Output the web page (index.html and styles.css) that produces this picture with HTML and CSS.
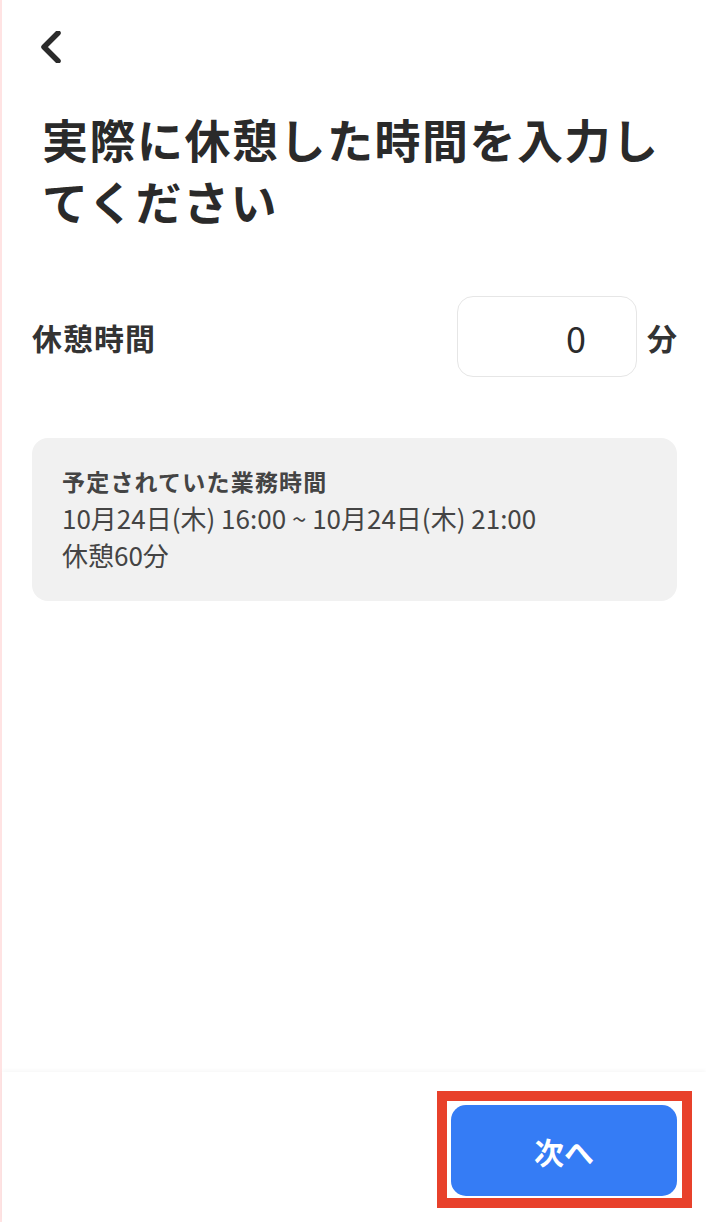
FILE: index.html
```html
<!DOCTYPE html>
<html lang="ja">
<head>
    <meta charset="UTF-8">
    <meta name="viewport" content="width=device-width, initial-scale=1.0">
    <title>休憩時間の入力</title>
    <link rel="stylesheet" href="styles.css">
</head>
<body>
    <div class="page">
        <main class="content">
            <header class="header">
                <button class="back" type="button" aria-label="戻る">
                    <svg width="32" height="32" viewBox="0 0 32 32">
                        <path d="M21 2 L7 16 L21 30" fill="none" stroke="#2b2b2b" stroke-width="5.5" stroke-linecap="round" stroke-linejoin="round"/>
                    </svg>
                </button>
                <h1 class="title">実際に休憩した時間を入力してください</h1>
            </header>

            <div class="break-row">
                <label class="break-label" for="breakMinutes">休憩時間</label>
                <div class="break-field">
                    <input class="break-input" type="text" id="breakMinutes" value="0" inputmode="numeric">
                    <span class="unit">分</span>
                </div>
            </div>

            <section class="schedule">
                <h2 class="schedule-title">予定されていた業務時間</h2>
                <p class="schedule-line">10月24日(木) 16:00 ~ 10月24日(木) 21:00</p>
                <p class="schedule-line">休憩60分</p>
            </section>
        </main>

        <footer class="footer">
            <div class="highlight">
                <button class="next" type="button">次へ</button>
            </div>
        </footer>
    </div>
</body>
</html>
```

FILE: styles.css
```css
html, body {
    margin: 0;
    padding: 0;
}
body {
    font-family: "Noto Sans CJK JP", "Noto Sans", sans-serif;
    color: #2b2b2b;
    background: #fff;
}
.page {
    min-height: 100vh;
    display: flex;
    flex-direction: column;
    border-left: 2px solid #ffe3e3;
    box-sizing: border-box;
}
.content {
    flex: 1;
    padding: 0 29px 0 30px;
}
.header {
    padding-top: 31px;
}
.back {
    display: block;
    margin: 0 0 0 5px;
    padding: 0;
    border: none;
    background: none;
    width: 32px;
    height: 32px;
    cursor: pointer;
}
.back svg {
    display: block;
}
.title {
    margin: 44px 0 0 10px;
    font-size: 46px;
    line-height: 62px;
    letter-spacing: 1.5px;
    font-weight: 700;
    color: #2a2a2a;
}
.break-row {
    display: flex;
    align-items: center;
    justify-content: space-between;
    margin-top: 65px;
}
.break-label {
    font-size: 30px;
    font-weight: 700;
    letter-spacing: 1px;
    color: #333;
}
.break-field {
    display: flex;
    align-items: center;
    gap: 10px;
}
.break-input {
    width: 180px;
    height: 81px;
    box-sizing: border-box;
    border: 1.5px solid #e6e6e6;
    border-radius: 16px;
    padding: 0 50px 0 10px;
    text-align: right;
    font-family: "Noto Sans CJK JP", "Noto Sans", sans-serif;
    font-size: 36px;
    color: #2b2b2b;
    background: #fff;
    outline: none;
}
.unit {
    font-size: 30px;
    font-weight: 700;
    color: #333;
}
.schedule {
    margin-top: 61px;
    background: #f1f1f1;
    border-radius: 16px;
    padding: 25px 30px 28px;
    color: #444;
}
.schedule-title {
    margin: 0;
    font-size: 23px;
    line-height: 36px;
    letter-spacing: 1.2px;
    font-weight: 700;
}
.schedule-line {
    margin: 0;
    font-size: 26px;
    line-height: 37px;
}
.footer {
    display: flex;
    justify-content: flex-end;
    padding: 19px 14px 14px;
    background: #fff;
    box-shadow: 0 -2px 4px rgba(0, 0, 0, 0.03);
}
.highlight {
    border: 10px solid #e8412b;
    padding: 4px 5px 2px 4px;
}
.next {
    display: block;
    width: 226px;
    height: 91px;
    border: none;
    border-radius: 15px;
    background: #357cf5;
    color: #fff;
    font-family: "Noto Sans CJK JP", "Noto Sans", sans-serif;
    font-size: 30px;
    font-weight: 700;
    cursor: pointer;
}
```
